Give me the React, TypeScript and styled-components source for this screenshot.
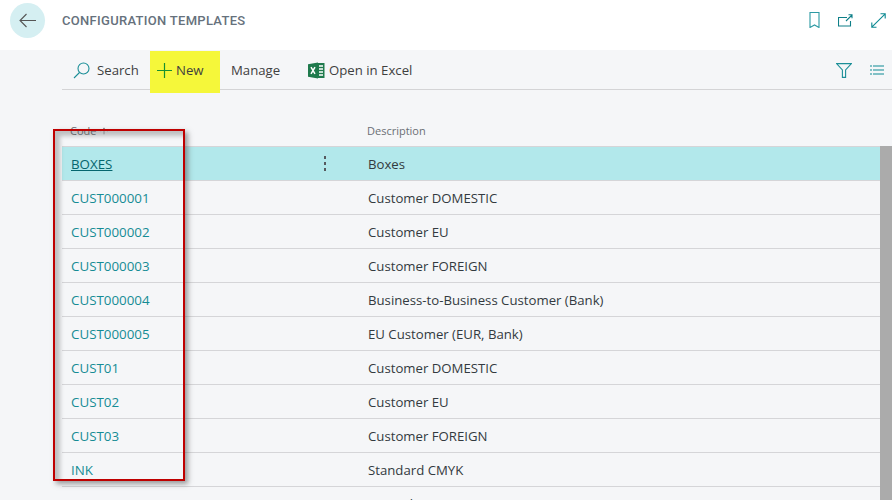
import styled, { createGlobalStyle } from "styled-components";
import { ArrowUp } from "lucide-react";

const GlobalStyle = createGlobalStyle`
  html, body {
    margin: 0;
    padding: 0;
    background: #f5f6f8;
    font-family: "Open Sans", "Liberation Sans", sans-serif;
    overflow: hidden;
  }
`;

const Page = styled.div`
  position: relative;
  width: 892px;
  height: 500px;
  overflow: hidden;
`;

const Header = styled.header`
  height: 50px;
  box-sizing: border-box;
  background: #fff;
  display: flex;
  align-items: center;
  padding: 0 6px 10px 10px;
`;

const BackButton = styled.div`
  width: 35px;
  height: 35px;
  border-radius: 50%;
  background: #d5eff2;
  display: flex;
  align-items: center;
  justify-content: center;
`;

const Title = styled.h1`
  margin: 0 0 0 17px;
  flex: 1;
  font-family: "Roboto", "Liberation Sans", sans-serif;
  font-size: 13px;
  font-weight: 500;
  letter-spacing: 0.3px;
  color: #66717c;
`;

const HeaderIcons = styled.div`
  display: flex;
  align-items: center;
  gap: 18px;
`;

const Content = styled.main`
  padding-left: 62px;
`;

const Toolbar = styled.div`
  height: 38px;
  display: flex;
  align-items: center;
  border-bottom: 1px solid #d4d4d6;
  padding-left: 11px;
  padding-top: 1px;
`;

const Action = styled.div<{ $gap?: number; $width?: number }>`
  width: ${(p) => (p.$width ? `${p.$width}px` : "auto")};
  display: flex;
  align-items: center;
  gap: ${(p) => p.$gap ?? 0}px;
  font-size: 13.2px;
  color: #3f3f3f;
  white-space: nowrap;
`;

const NewAction = styled(Action)`
  position: relative;
  isolation: isolate;
  padding-left: 6px;
  box-sizing: border-box;

  &::before {
    content: "";
    position: absolute;
    z-index: -1;
    left: 0;
    top: -10px;
    width: 70px;
    height: 42px;
    background: #f5f73a;
  }
`;

const ToolbarEnd = styled.div`
  margin-left: auto;
  display: flex;
  align-items: center;
  gap: 18px;
  padding-right: 8px;
`;

const ColumnHead = styled.div`
  height: 56px;
  box-sizing: border-box;
  display: grid;
  grid-template-columns: 305px 1fr;
  align-items: end;
  padding-bottom: 8px;
  font-size: 11px;
  color: #6b6f75;
`;

const HeadCell = styled.div`
  display: flex;
  align-items: center;
  gap: 3px;
  padding-left: 8px;
`;

const Row = styled.div<{ $selected?: boolean }>`
  height: 34px;
  box-sizing: border-box;
  display: grid;
  grid-template-columns: 228px 36px 41px 1fr;
  align-items: center;
  border-top: 1px solid #d5d5d8;
  margin-right: 12px;
  background: ${(p) => (p.$selected ? "#b2e8eb" : "transparent")};
`;

const CodeCell = styled.a<{ $selected?: boolean }>`
  padding-left: 9px;
  font-size: 13.35px;
  color: ${(p) => (p.$selected ? "#05666e" : "#158c95")};
  text-decoration: ${(p) => (p.$selected ? "underline" : "none")};
`;

const MenuDots = styled.span`
  display: flex;
  flex-direction: column;
  align-items: center;
  gap: 3px;
  width: 3px;
  justify-self: end;
`;

const Dot = styled.i`
  width: 2px;
  height: 3px;
  background: #55595e;
`;

const DescriptionCell = styled.span`
  grid-column: 4;
  font-size: 13.2px;
  color: #333a40;
  padding-left: 1px;
`;

const Scrollbar = styled.div`
  position: absolute;
  right: 0;
  top: 146px;
  bottom: 0;
  width: 12px;
  background: #ababab;
`;

const RedFrame = styled.div`
  position: absolute;
  left: 53px;
  top: 129px;
  width: 128px;
  height: 348px;
  border: 2px solid #bf0000;
  box-shadow: 3px 3px 5px rgba(80, 80, 80, 0.55),
    inset 5px 5px 4px rgba(90, 90, 90, 0.35);
`;

const rows = [
  { code: "BOXES", description: "Boxes", selected: true },
  { code: "CUST000001", description: "Customer DOMESTIC" },
  { code: "CUST000002", description: "Customer EU" },
  { code: "CUST000003", description: "Customer FOREIGN" },
  { code: "CUST000004", description: "Business-to-Business Customer (Bank)" },
  { code: "CUST000005", description: "EU Customer (EUR, Bank)" },
  { code: "CUST01", description: "Customer DOMESTIC" },
  { code: "CUST02", description: "Customer EU" },
  { code: "CUST03", description: "Customer FOREIGN" },
  { code: "INK", description: "Standard CMYK" },
  { code: "INVOICE", description: "PMS ink" },
];

export default function App() {
  return (
    <Page>
      <GlobalStyle />
      <Header>
        <BackButton>
          <svg width="17" height="15" viewBox="0 0 17 15" fill="none" stroke="#555" strokeWidth="1.1">
            <path d="M17 7.5H1M7.5 1 1 7.5 7.5 14" />
          </svg>
        </BackButton>
        <Title>CONFIGURATION TEMPLATES</Title>
        <HeaderIcons>
          <svg width="11" height="16" viewBox="0 0 11 16" fill="none" stroke="#2d9aa3" strokeWidth="1.1">
            <path d="M1 .5h9v15L5.5 13 1 15.5z" />
          </svg>
          <svg width="15" height="13" viewBox="0 0 15 13" fill="none" stroke="#0e7f88" strokeWidth="1.1">
            <path d="M9 3.5H.5v8.500h12V7M8 7l6-6M10.500 .8H14v3.500" />
          </svg>
          <svg width="15" height="15" viewBox="0 0 15 15" fill="none" stroke="#0e8a93" strokeWidth="1.1">
            <path d="M.8 14.200 14.200 .8M9.500 .8h4.700v4.700M.8 9.500v4.700h4.700" />
          </svg>
        </HeaderIcons>
      </Header>
      <Content>
        <Toolbar>
          <Action $gap={7} $width={77}>
            <svg width="17" height="17" viewBox="0 0 17 17" fill="none" stroke="#1c8f98" strokeWidth="1.1">
              <circle cx="10.500" cy="6.500" r="5.500" />
              <path d="M6.500 10.500 1 16" />
            </svg>
            Search
          </Action>
          <NewAction $gap={3} $width={81}>
            <svg width="17" height="17" viewBox="0 0 17 17" fill="none" stroke="#17912f" strokeWidth="1.2">
              <path d="M8.500 1v15M1 8.500h15" />
            </svg>
            New
          </NewAction>
          <Action $width={77}>Manage</Action>
          <Action $gap={4}>
            <svg width="17" height="17" viewBox="0 0 17 17">
              <path d="M9 1h7.500v15H9z" fill="#1f7a4d" />
              <path d="M11 4h4M11 7h4M11 10h4M11 13h4" stroke="#fff" strokeWidth="1.400" />
              <path d="M0 2.300 10 .6v15.800L0 14.700z" fill="#1f7a4d" />
              <path d="m3 5.200 4 6.600M7 5.200l-4 6.600" stroke="#fff" strokeWidth="1.500" />
            </svg>
            Open in Excel
          </Action>
          <ToolbarEnd>
            <svg width="16" height="15" viewBox="0 0 16 15" fill="none" stroke="#1c8f98" strokeWidth="1.1">
              <path d="M.6.6h14.800L9.600 7v7.400H6.400V7z" />
            </svg>
            <svg width="14" height="10" viewBox="0 0 14 10" fill="none" stroke="#0e8a93" strokeWidth="1.2">
              <path d="M0 1h2M3 1h11M0 5h2M3 5h11M0 9h2M3 9h11" />
            </svg>
          </ToolbarEnd>
        </Toolbar>
        <ColumnHead>
          <HeadCell>
            Code <ArrowUp size={10} strokeWidth={1.5} />
          </HeadCell>
          <span>Description</span>
        </ColumnHead>
        {rows.map((row) => (
          <Row key={row.code} $selected={row.selected}>
            <CodeCell $selected={row.selected}>{row.code}</CodeCell>
            {row.selected && (
              <MenuDots>
                <Dot />
                <Dot />
                <Dot />
              </MenuDots>
            )}
            <DescriptionCell>{row.description}</DescriptionCell>
          </Row>
        ))}
      </Content>
      <Scrollbar />
      <RedFrame />
    </Page>
  );
}
